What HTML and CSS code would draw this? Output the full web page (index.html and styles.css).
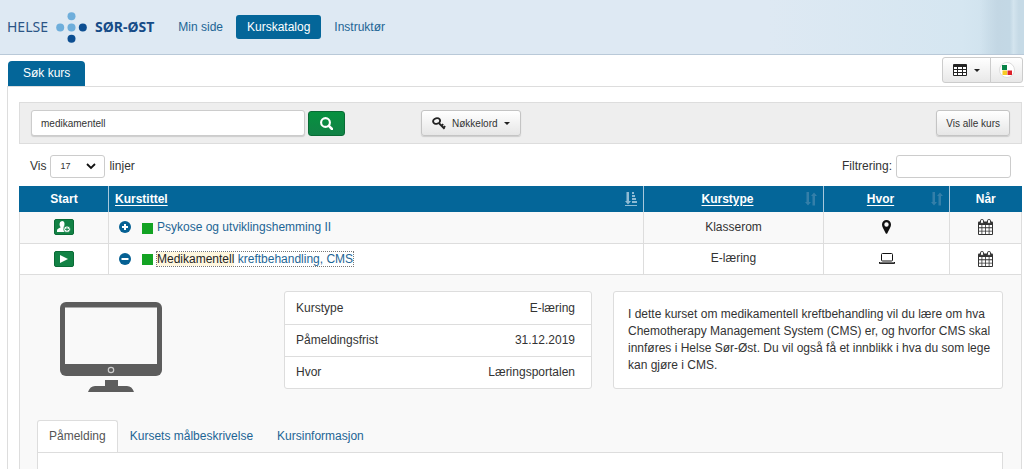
FILE: index.html
```html
<!DOCTYPE html>
<html lang="no">
<head>
<meta charset="utf-8">
<title>Kurskatalog</title>
<link rel="stylesheet" href="styles.css">
</head>
<body>
<svg class="sprite" aria-hidden="true">
  <symbol id="calendar" viewBox="0 0 15 16">
    <path fill="currentColor" d="M0 3.5Q0 2.500 1 2.500H14Q15 2.500 15 3.500V15Q15 16 14 16H1Q0 16 0 15Z"/>
    <path fill="#fff" d="M1 6h2.500v2.300H1zM4.300 6h2.800v2.300H4.300zM7.900 6h2.800v2.300H7.900zM11.500 6H14v2.300h-2.500zM1 9.200h2.500v2.500H1zM4.300 9.200h2.800v2.500H4.300zM7.900 9.200h2.800v2.500H7.900zM11.500 9.200H14v2.500h-2.500zM1 12.600h2.500V15H1zM4.300 12.600h2.800V15H4.300zM7.900 12.600h2.800V15H7.900zM11.500 12.600H14V15h-2.500z"/>
    <rect x="2.500" y=".5" width="3" height="4" rx="1.300" fill="#fff" stroke="currentColor"/>
    <rect x="9.500" y=".5" width="3" height="4" rx="1.300" fill="#fff" stroke="currentColor"/>
  </symbol>
  <symbol id="sort" viewBox="0 0 12 14">
    <path fill="currentColor" d="M1.500 0h2.500v10h2l-3 3.500-3-3.500h1.500zM7.500 13.500V4H6l3-3.500L12 4h-2v9.500z"/>
  </symbol>
</svg>

<header class="topbar">
  <a class="logo" href="#">
    <span>HELSE</span>
    <svg class="logo-dots" viewBox="0 0 31 31" aria-hidden="true">
      <g fill="#6eaedb"><circle cx="15.500" cy="4.200" r="4"/><circle cx="4.200" cy="15.500" r="4"/><circle cx="15.500" cy="15.500" r="4"/></g>
      <g fill="#0c4e91"><circle cx="26.800" cy="15.500" r="4"/><circle cx="15.500" cy="26.800" r="4"/></g>
    </svg>
    <strong>SØR-ØST</strong>
  </a>
  <nav class="menu">
    <a href="#">Min side</a>
    <a class="active" href="#">Kurskatalog</a>
    <a href="#">Instruktør</a>
  </nav>
</header>

<div class="tabrow">
  <a class="page-tab" href="#">Søk kurs</a>
  <div class="tools">
    <button class="tool wide" type="button" aria-label="Visning">
      <svg width="14" height="12" viewBox="0 0 14 12"><rect width="14" height="12" rx="1" fill="#222"/><path fill="#fff" d="M1 3h3v2H1zM5 3h4v2H5zM10 3h3v2h-3zM1 6h3v2H1zM5 6h4v2H5zM10 6h3v2h-3zM1 9h3v2H1zM5 9h4v2H5zM10 9h3v2h-3z"/></svg>
      <span class="caret"></span>
    </button>
    <button class="tool" type="button" aria-label="Farger">
      <svg width="16" height="16" viewBox="0 0 16 16"><circle cx="8" cy="8" r="7.500" fill="#fff" stroke="#ddd"/><path fill="#078347" d="M3 3h5v5H3z"/><path fill="#f6cc25" d="M3.500 8.500H8V13H3.500z"/><path fill="#dd2029" d="M8.500 8.500H13V13H8.500z"/></svg>
    </button>
  </div>
</div>

<main class="panel">
  <form class="searchbar">
    <input class="query" type="text" value="medikamentell" aria-label="Søk">
    <button class="search" type="button" aria-label="Søk">
      <svg width="13" height="13" viewBox="0 0 13 13" fill="none" stroke="#fff"><circle cx="5.500" cy="5.500" r="4.400" stroke-width="2.100"/><path d="M8.800 8.800l3.200 3.200" stroke-width="2.500" stroke-linecap="round"/></svg>
    </button>
    <button class="btn keywords" type="button">
      <svg width="14" height="13" viewBox="0 0 14 13" fill="none" stroke="#222"><ellipse cx="4.600" cy="4" rx="3.500" ry="2.800" transform="rotate(-15 4.600 4)" stroke-width="1.900"/><path d="M6.800 6l5.700 5.800M9.300 9l1.900-1.900M11.300 11l1.900-1.900" stroke-width="1.800"/></svg>
      Nøkkelord <span class="caret"></span>
    </button>
    <button class="btn all" type="button">Vis alle kurs</button>
  </form>

  <div class="controls">
    <label class="lines">Vis
      <span class="selectbox"><select><option>17</option></select>
        <svg width="10" height="7" viewBox="0 0 10 7" fill="none" stroke="#111" stroke-width="1.800"><path d="M1 1l4 4 4-4"/></svg></span>
      linjer</label>
    <label class="filter">Filtrering: <input type="text"></label>
  </div>

  <table class="courses">
    <colgroup><col class="c-start"><col><col class="c-type"><col class="c-where"><col class="c-when"></colgroup>
    <thead>
      <tr>
        <th>Start</th>
        <th class="title"><div class="head"><a href="#">Kurstittel</a>
          <svg class="sorted" viewBox="0 0 12 14"><path fill="currentColor" d="M1.500 0H4v9h2l-3 3.500L0 9h1.500zM7 0h2v2H7zM7 3h3v2H7zM7 6h4v2H7zM7 9h5v2H7zM0 13h12v1H0z"/></svg></div></th>
        <th><div class="head mid"><a href="#">Kurstype</a><svg><use href="#sort"/></svg></div></th>
        <th><div class="head mid"><a href="#">Hvor</a><svg><use href="#sort"/></svg></div></th>
        <th>Når</th>
      </tr>
    </thead>
    <tbody>
      <tr class="odd">
        <td><button class="go" type="button" aria-label="Meld på"><svg width="14" height="12" viewBox="0 0 14 12"><path fill="#fff" d="M5 0q2.500 0 2.500 3T6.300 6.300L10 8v3H0V9.500Q0 8 1.500 7.500L3.700 6.300Q2.500 5.500 2.500 3T5 0z"/><circle cx="10" cy="8.300" r="3.300" fill="#fff" stroke="#128245" stroke-width=".8"/><path d="M8 8.300h4M10 6.300v4" stroke="#128245"/></svg></button></td>
        <td class="title"><div class="course">
          <button class="toggle" type="button" aria-label="Vis detaljer"><svg viewBox="0 0 12 12"><circle cx="6" cy="6" r="6" fill="#056093"/><path d="M3 6h6M6 3v6" stroke="#fff" stroke-width="2"/></svg></button>
          <span class="status"></span><a href="#">Psykose og utviklingshemming II</a></div></td>
        <td>Klasserom</td>
        <td><svg class="icon" width="9" height="14" viewBox="0 0 9 14"><path fill="#111" fill-rule="evenodd" d="M4.500 0A4.500 4.500 0 0 1 9 4.500Q9 6 8 8L5.200 13.400Q4.500 14.300 3.800 13.400L1 8Q0 6 0 4.500A4.500 4.500 0 0 1 4.500 0zm0 2.300a2.200 2.200 0 1 0 0 4.400 2.200 2.200 0 0 0 0-4.400z"/></svg></td>
        <td><svg class="icon" width="15" height="16"><use href="#calendar"/></svg></td>
      </tr>
      <tr>
        <td><button class="go" type="button" aria-label="Start"><svg width="8" height="8" viewBox="0 0 8 8"><path fill="#fff" d="M0 0l8 4-8 4z"/></svg></button></td>
        <td class="title"><div class="course">
          <button class="toggle" type="button" aria-label="Skjul detaljer"><svg viewBox="0 0 12 12"><circle cx="6" cy="6" r="6" fill="#056093"/><path d="M2.500 6h7" stroke="#fff" stroke-width="2"/></svg></button>
          <span class="status"></span><a class="focused" href="#"><mark>Medikamentell</mark> kreftbehandling, CMS</a></div></td>
        <td>E-læring</td>
        <td><svg class="icon" width="16" height="11" viewBox="0 0 16 11"><rect x="2.500" y=".5" width="11" height="7.500" rx="1" fill="none" stroke="#111"/><path fill="#111" d="M0 9h16v1q0 1-1 1H1q-1 0-1-1z"/><path d="M1 9.700h14" stroke="#fff" stroke-width=".5"/></svg></td>
        <td><svg class="icon" width="15" height="16"><use href="#calendar"/></svg></td>
      </tr>
    </tbody>
  </table>

  <section class="details">
    <div class="summary">
      <div class="picture">
        <svg width="102" height="90" viewBox="0 0 102 90" aria-hidden="true"><rect width="102" height="74" rx="6" fill="#5d5d5d"/><path fill="#f9f9f9" d="M5 5.500h92V62H5z"/><circle cx="51" cy="68" r="2.700" fill="none" stroke="#ccc" stroke-width="1.200"/><path fill="#5d5d5d" d="M45 78h13v6h9q5 0 7 6H28q2-6 7-6h10z"/></svg>
      </div>
      <dl class="facts">
        <div><dt>Kurstype</dt><dd>E-læring</dd></div>
        <div><dt>Påmeldingsfrist</dt><dd>31.12.2019</dd></div>
        <div><dt>Hvor</dt><dd>Læringsportalen</dd></div>
      </dl>
      <p class="about">I dette kurset om medikamentell kreftbehandling vil du lære om hva Chemotherapy Management System (CMS) er, og hvorfor CMS skal innføres i Helse Sør-Øst. Du vil også få et innblikk i hva du som lege kan gjøre i CMS.</p>
    </div>
    <nav class="subtabs">
      <a class="current" href="#">Påmelding</a>
      <a href="#">Kursets målbeskrivelse</a>
      <a href="#">Kursinformasjon</a>
    </nav>
    <div class="subpanel"></div>
  </section>
</main>
</body>
</html>
```

FILE: styles.css
```css
* { box-sizing: border-box; }
body {
  margin: 0;
  min-height: 100vh;
  display: flex;
  flex-direction: column;
  background: #fff;
  color: #333;
  font: 12px/17px "Liberation Sans", Arial, sans-serif;
}
a { color: #1d6595; text-decoration: none; }
button, input, select { font: inherit; color: inherit; }
button { padding: 0; cursor: pointer; }
svg { display: block; flex: none; }
.sprite { position: absolute; width: 0; height: 0; }

.topbar {
  height: 55px;
  padding-left: 7px;
  display: flex;
  align-items: center;
  border-bottom: 1px solid #b9c9d8;
  background:
    linear-gradient(90deg, transparent, #c3d7e4 40%, #c3d8e5 68%, #d3e4ee 76%, #c6dae6 88%) right / 44px 100% no-repeat,
    linear-gradient(90deg, #dee9f3 75%, #d5e6f1 94%, #cadeea);
}
.logo {
  display: flex;
  align-items: center;
  gap: 8px;
  color: #2b5586;
  font: 14px/20px "Noto Sans", "Open Sans", sans-serif;
}
.logo strong { color: #154b87; }
.logo-dots { width: 31px; height: 31px; }
.menu { display: flex; margin-left: 13px; gap: 2px; }
.menu a { padding: 3px 11px; border-radius: 3px; }
.menu .active { background: #046699; color: #fff; }

.menu, .page-tab { line-height: 18px; }
.tabrow {
  height: 31px;
  padding: 0 1px 0 8px;
  display: flex;
  align-items: flex-end;
  justify-content: space-between;
}
.page-tab {
  padding: 3px 15px 4px;
  border-radius: 4px 4px 0 0;
  background: #046699;
  color: #fff;
}
.tools { display: flex; align-self: flex-start; padding-top: 2px; }
.tool {
  width: 33px;
  height: 26px;
  display: flex;
  align-items: center;
  justify-content: center;
  gap: 7px;
  border: 1px solid #ccc;
  border-radius: 0 3px 3px 0;
  background: linear-gradient(#fff, #e8e8e8);
}
.tool.wide { width: 49px; margin-right: -1px; border-radius: 3px 0 0 3px; }
.caret { border: 3px solid transparent; border-top-color: #222; border-bottom: 0; }

.panel {
  flex: 1;
  display: flex;
  flex-direction: column;
  margin-left: 7px;
  padding: 15px 2px 0 11px;
  border: solid #ddd;
  border-width: 1px 0 0 1px;
}
.searchbar {
  display: flex;
  align-items: center;
  padding: 7px 11px;
  border: 1px solid #ddd;
  background: #eee;
  font-size: 10px;
}
.query {
  width: 274px;
  height: 26px;
  padding: 0 9px;
  border: 1px solid #ccc;
  border-radius: 3px;
  background: #fff;
  box-shadow: 0 1px 1px #ccc;
}
.search {
  width: 37px;
  height: 25px;
  margin-left: 3px;
  display: flex;
  align-items: center;
  justify-content: center;
  border: 1px solid #096b35;
  border-radius: 3px;
  background: linear-gradient(#06913f, #118246);
}
.btn {
  height: 26px;
  padding: 0 9px;
  display: flex;
  align-items: center;
  gap: 5px;
  border: 1px solid #c4c4c4;
  border-radius: 3px;
  background: linear-gradient(#fff, #e6e6e6);
  box-shadow: 0 1px 1px #ccc;
}
.keywords { margin-left: 76px; gap: 6px; padding: 0 10px; }
.all { margin-left: auto; }

.controls {
  display: flex;
  justify-content: space-between;
  padding: 11px 11px 8px;
}
.controls label { display: flex; align-items: center; gap: 4px; }
.selectbox { display: flex; align-items: center; position: relative; }
.selectbox select {
  appearance: none;
  width: 55px;
  height: 23px;
  padding: 0 9px;
  border: 1px solid #ccc;
  border-radius: 3px;
  background: #fff;
  font-size: 9px;
}
.selectbox svg { position: absolute; right: 9px; pointer-events: none; }
.filter input {
  width: 115px;
  height: 23px;
  border: 1px solid #ccc;
  border-radius: 3px;
}

.courses {
  width: 100%;
  table-layout: fixed;
  border-collapse: collapse;
  text-align: center;
}
.c-start { width: 89px; }
.c-type { width: 180px; }
.c-where { width: 126px; }
.c-when { width: 72px; }
.courses th {
  height: 26px;
  padding: 0 6px;
  background: #046699;
  border-left: 1px solid #a9c8dc;
  color: #fff;
}
.courses th:first-child { border-left-color: #046699; }
.courses th a { color: #fff; text-decoration: underline; text-underline-offset: 2px; }
.head { display: flex; align-items: center; justify-content: space-between; }
.head svg { width: 12px; height: 14px; color: #347fa9; }
.head .sorted { color: #8ebbd4; }
.head.mid a { flex: 1; }
.courses .title { padding-left: 6px; text-align: left; }
.courses td { height: 31px; padding: 0; border: 1px solid #ddd; border-top: 0; }
.odd { background: #f9f9f9; }
.icon { margin: 0 auto; }
.go {
  width: 20px;
  height: 16px;
  margin: 0 auto;
  display: flex;
  align-items: center;
  justify-content: center;
  border: 1px solid #0a6c36;
  border-radius: 2px;
  background: #128245;
}
.course { display: flex; align-items: center; padding-left: 4px; }
.toggle { width: 12px; height: 12px; border: 0; background: none; }
.status { width: 11px; height: 11px; margin: 2px 4px 0 11px; background: #13a323; }
.focused { outline: 1px dotted #777; line-height: 14px; }
mark { background: #fff7df; color: #222; }

.details {
  flex: 1;
  display: flex;
  flex-direction: column;
  padding: 16px 18px 0 17px;
  border: solid #ddd;
  border-width: 0 1px;
  background: #f9f9f9;
}
.summary { display: grid; grid-template-columns: 247px 308px 1fr; align-items: start; }
.picture { padding: 11px 0 0 23px; }
.facts, .about {
  margin: 0;
  border: 1px solid #ddd;
  border-radius: 3px;
  background: #fff;
}
.facts div {
  display: flex;
  justify-content: space-between;
  padding: 8px 16px 7px 11px;
}
.facts div + div { padding-top: 7px; border-top: 1px solid #ddd; }
.facts dd { margin: 0; }
.about { margin-left: 21px; padding: 14px 8px 14px 14px; }
.subtabs { display: flex; margin-top: 28px; }
.subtabs a { padding: 7px 11px; border: 1px solid transparent; border-bottom: 0; }
.subtabs .current {
  margin-bottom: -1px;
  padding-bottom: 8px;
  border-color: #ddd;
  border-radius: 3px 3px 0 0;
  background: #fff;
  color: #555;
}
.subpanel { flex: 1; min-height: 16px; border: solid #ddd; border-width: 1px 1px 0; background: #fff; }
```
